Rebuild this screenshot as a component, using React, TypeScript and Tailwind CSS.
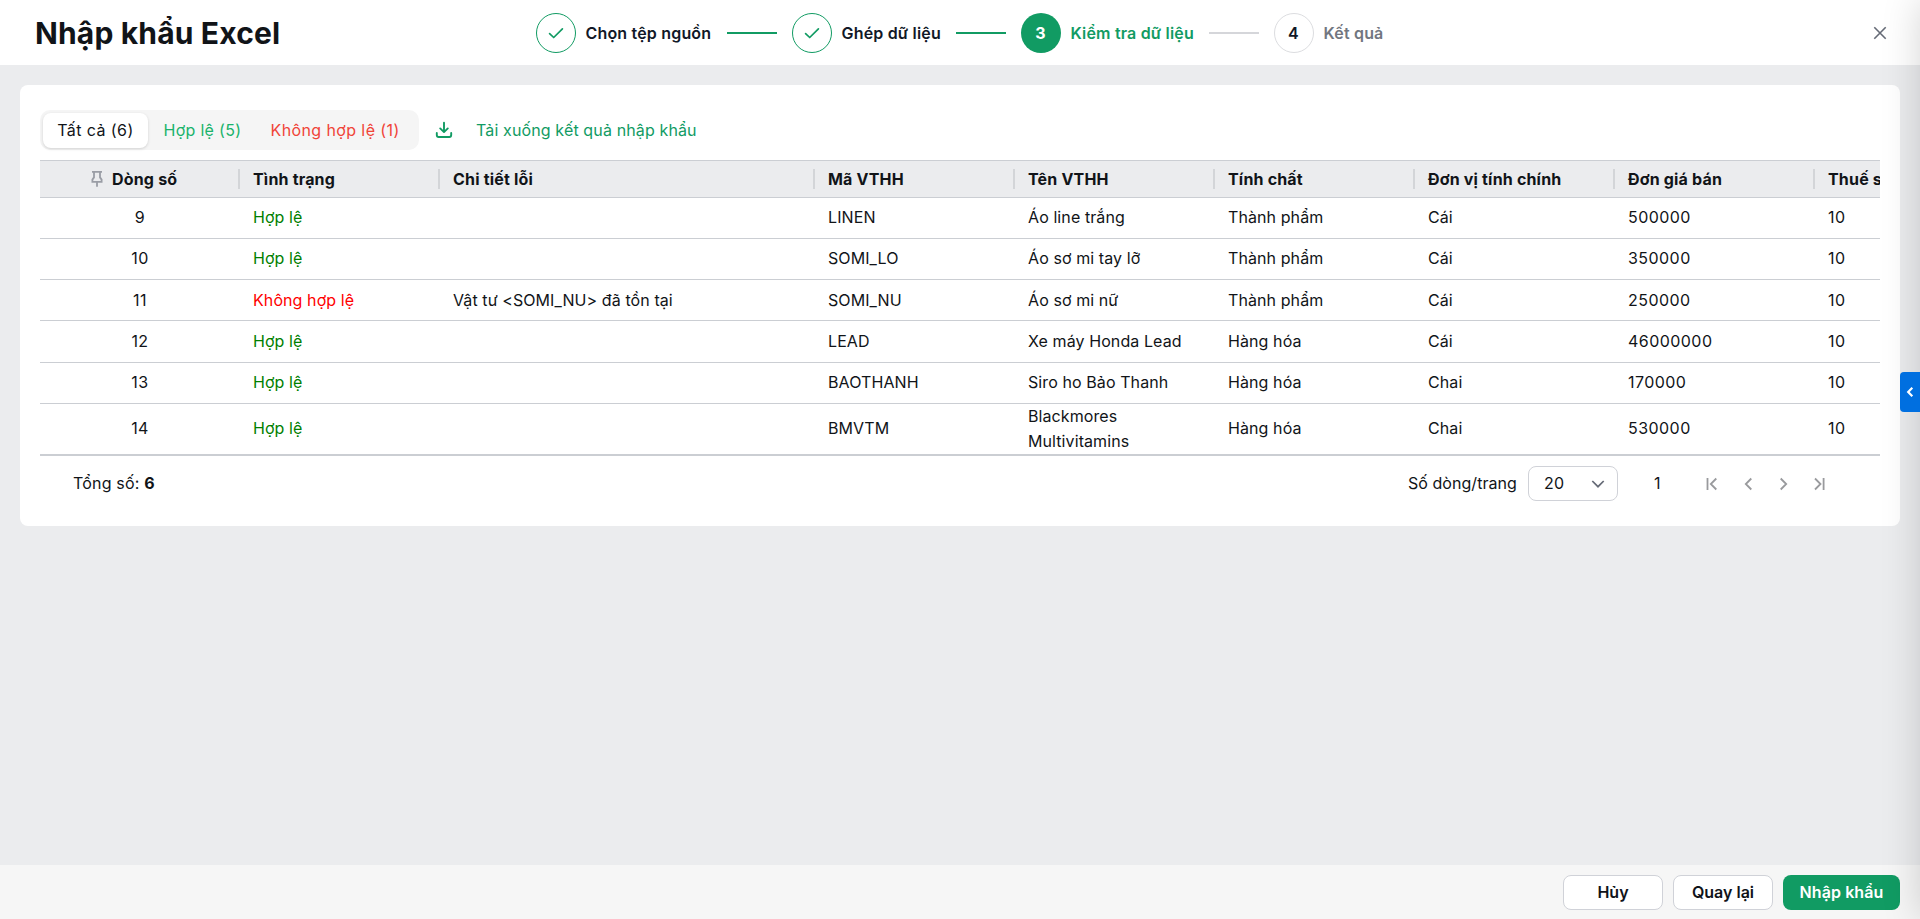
import React from "react";

type Column = { title: string; width: string; pinned?: boolean };
type Row = { line: number; ok: boolean; error: string; cells: string[]; height: string };

const columns: Column[] = [
  { title: "Dòng số", width: "w-[200px]", pinned: true },
  { title: "Tình trạng", width: "w-[200px]" },
  { title: "Chi tiết lỗi", width: "w-[375px]" },
  { title: "Mã VTHH", width: "w-[200px]" },
  { title: "Tên VTHH", width: "w-[200px]" },
  { title: "Tính chất", width: "w-[200px]" },
  { title: "Đơn vị tính chính", width: "w-[200px]" },
  { title: "Đơn giá bán", width: "w-[200px]" },
  { title: "Thuế suất", width: "w-[200px]" },
];

const single = "h-[41px] border-b pb-px";
const rows: Row[] = [
  { line: 9, ok: true, error: "", cells: ["LINEN", "Áo line trắng", "Thành phẩm", "Cái", "500000", "10"], height: single },
  { line: 10, ok: true, error: "", cells: ["SOMI_LO", "Áo sơ mi tay lỡ", "Thành phẩm", "Cái", "350000", "10"], height: single },
  { line: 11, ok: false, error: "Vật tư <SOMI_NU> đã tồn tại", cells: ["SOMI_NU", "Áo sơ mi nữ", "Thành phẩm", "Cái", "250000", "10"], height: "h-[41px] border-b pt-px" },
  { line: 12, ok: true, error: "", cells: ["LEAD", "Xe máy Honda Lead", "Hàng hóa", "Cái", "46000000", "10"], height: "h-[42px] border-b" },
  { line: 13, ok: true, error: "", cells: ["BAOTHANH", "Siro ho Bảo Thanh", "Hàng hóa", "Chai", "170000", "10"], height: single },
  { line: 14, ok: true, error: "", cells: ["BMVTM", "Blackmores Multivitamins", "Hàng hóa", "Chai", "530000", "10"], height: "h-[52px] border-b-2 [&>*:not(:nth-child(5))]:-mt-px" },
];

function CheckIcon() {
  return (
    <svg width="16" height="16" viewBox="0 0 16 16" fill="none" stroke="#119b63" strokeWidth="1.7" strokeLinecap="round" strokeLinejoin="round">
      <path d="M1.6 8.6 5.7 12.5 14.4 3.9" />
    </svg>
  );
}

function DoneStep({ label, width }: { label: string; width: string }) {
  return (
    <div className="flex items-center">
      <div className="flex size-10 items-center justify-center rounded-full border border-[#119b63]">
        <CheckIcon />
      </div>
      <span className={"ml-2.5 font-semibold whitespace-nowrap " + width}>{label}</span>
    </div>
  );
}

function PinIcon() {
  return (
    <svg width="12" height="18" viewBox="0 0 12 18" fill="none" stroke="#9a9da5" strokeWidth="1.8">
      <path d="M1 1.8h10M3 1.8v5.6L1.4 9.6v2.2h9.2V9.6L9 7.4V1.8M6 11.8v5" />
    </svg>
  );
}

function PageIcon({ d, className }: { d: string; className: string }) {
  return (
    <svg className={className} width="12" height="14" viewBox="0 0 12 14" fill="none" stroke="#999a9d" strokeWidth="1.8">
      <path d={d} />
    </svg>
  );
}

function Stepper() {
  return (
    <div className="flex items-center pl-[255px] tracking-[0.18px] text-[#111827]">
      <DoneStep label="Chọn tệp nguồn" width="w-[126px]" />
      <i className="mx-[15px] h-0.5 w-[50px] bg-[#119b63]" />
      <DoneStep label="Ghép dữ liệu" width="w-[99px]" />
      <i className="mx-[15px] h-0.5 w-[50px] bg-[#119b63]" />
      <div className="flex items-center">
        <div className="flex size-10 items-center justify-center rounded-full bg-[#119b63] font-bold text-white">3</div>
        <span className="ml-2.5 w-[123px] font-semibold whitespace-nowrap text-[#119b63]">Kiểm tra dữ liệu</span>
      </div>
      <i className="mx-[15px] h-0.5 w-[50px] bg-[#d5d6da]" />
      <div className="flex items-center">
        <div className="flex size-10 items-center justify-center rounded-full border border-[#dcdde0] font-semibold">4</div>
        <span className="ml-2.5 font-semibold text-[#717680]">Kết quả</span>
      </div>
    </div>
  );
}

function Header() {
  return (
    <header className="flex h-[65px] shrink-0 items-center bg-white pt-px pl-[35px]">
      <h1 className="w-[245.5px] text-[30px] font-bold tracking-[0.16px] whitespace-nowrap text-[#111418]">Nhập khẩu Excel</h1>
      <Stepper />
      <button className="mr-[33px] ml-auto flex size-[14px] items-center justify-center">
        <svg width="14" height="14" viewBox="0 0 14 14" stroke="#656a76" strokeWidth="1.6">
          <path d="M1.3 1.3 12.7 12.7M12.7 1.3 1.3 12.7" />
        </svg>
      </button>
    </header>
  );
}

function Toolbar() {
  return (
    <div className="flex h-10 items-center">
      <div className="flex h-10 w-[379px] items-center rounded-[10px] bg-[#f5f5f5] p-[3px] whitespace-nowrap">
        <button className="h-[35px] w-[105px] rounded-[8px] bg-white tracking-[0.42px] shadow-[0_1px_3px_rgba(0,0,0,0.15)]">Tất cả (6)</button>
        <button className="ml-[15.5px] w-[76px] text-left tracking-[0.3px] text-[#19b36b]">Hợp lệ (5)</button>
        <button className="ml-[31px] tracking-[0.4px] text-[#f04438]">Không hợp lệ (1)</button>
      </div>
      <svg className="ml-[16px]" width="18" height="18" viewBox="0 0 18 18" fill="none" stroke="#119b63" strokeWidth="1.9" strokeLinecap="round" strokeLinejoin="round">
        <path d="M9 1.8v9M5.2 7.4 9 11.1l3.8-3.7M1.8 12v2.1c0 1.2.7 1.9 1.9 1.9h10.6c1.2 0 1.9-.7 1.9-1.9V12" />
      </svg>
      <a className="ml-[23px] tracking-[0.13px] text-[#119b63]">Tải xuống kết quả nhập khẩu</a>
    </div>
  );
}

function Table() {
  return (
    <div className="mt-2.5 w-[1840px] overflow-hidden">
      <div className="flex h-[38px] w-[1975px] items-center border-y border-[#cbced3] bg-[#ebecee] font-bold tracking-[0.18px]">
        {columns.map((c) => (
          <div
            key={c.title}
            className={"flex h-5 shrink-0 items-center border-r-2 border-[#d3d5d8] whitespace-nowrap " + c.width + (c.pinned ? " pl-[51px]" : " pl-[13px]")}
          >
            {c.pinned && <span className="mr-[9px]"><PinIcon /></span>}
            {c.title}
          </div>
        ))}
      </div>
      {rows.map((r) => (
        <div key={r.line} className={"flex w-[1975px] items-center border-[#cbced3] leading-[25px] tracking-[0.09px] " + r.height}>
          <div className="w-[200px] shrink-0 text-center tracking-[0.45px]">{r.line}</div>
          <div className={"w-[200px] shrink-0 pl-[13px] " + (r.ok ? "text-[#008000]" : "text-[#ff0000]")}>{r.ok ? "Hợp lệ" : "Không hợp lệ"}</div>
          <div className="w-[375px] shrink-0 pl-[13px]">{r.error}</div>
          {r.cells.map((cell, i) => (
            <div key={i} className={"w-[200px] shrink-0 px-[13px]" + (i > 3 ? " tracking-[0.45px]" : "")}>{cell}</div>
          ))}
        </div>
      ))}
    </div>
  );
}

function Pagination() {
  return (
    <div className="mt-2.5 flex h-[35px] items-center pl-[33px]">
      <span className="pb-0.5 tracking-[0.17px]">Tổng số: <b>6</b></span>
      <span className="mr-[11px] ml-auto pb-0.5 tracking-[0.06px]">Số dòng/trang</span>
      <div className="flex h-[35px] w-[90px] items-center rounded-[8px] border border-[#d0d2d8] pl-[15px]">
        <span className="pb-0.5 tracking-[0.3px]">20</span>
        <svg className="mr-[12px] ml-auto" width="14" height="10" viewBox="0 0 14 10" fill="none" stroke="#656a76" strokeWidth="1.7">
          <path d="M1.3 2 7 7.7 12.7 2" />
        </svg>
      </div>
      <span className="ml-[36px] w-[50px] pb-0.5">1</span>
      <PageIcon className="ml-[2px]" d="M1.5 1v12M10.3 1.5 4.8 7l5.5 5.5" />
      <PageIcon className="ml-[25px]" d="M8.3 1.5 2.8 7l5.5 5.5" />
      <PageIcon className="ml-[23px]" d="M2.7 1.5 8.2 7l-5.5 5.5" />
      <PageIcon className="mr-[55px] ml-[23px]" d="M2 1.5 7.5 7 2 12.5M10.6 1v12" />
    </div>
  );
}

function Footer() {
  return (
    <footer className="flex h-[54px] shrink-0 items-center justify-end gap-2.5 bg-[#f6f6f6] pr-5 pt-px font-semibold text-[#101319]">
      <button className="h-[35px] w-[100px] rounded-[8px] border border-[#d0d2d8] bg-white pb-0.5">Hủy</button>
      <button className="h-[35px] w-[100px] rounded-[8px] border border-[#d0d2d8] bg-white pb-0.5">Quay lại</button>
      <button className="h-[35px] w-[117px] rounded-[8px] bg-[#119b63] pb-0.5 tracking-[0.1px] text-white">Nhập khẩu</button>
    </footer>
  );
}

export default function App() {
  return (
    <div className="relative flex h-[919px] w-[1920px] flex-col overflow-hidden bg-[#ebecee] font-['Inter',sans-serif] text-[16px] text-[#111418]">
      <Header />
      <main className="flex-1 p-5">
        <section className="h-[441px] rounded-[8px] bg-white px-5 pt-[25px]">
          <Toolbar />
          <Table />
          <Pagination />
        </section>
      </main>
      <Footer />
      <aside className="pointer-events-none absolute top-0 left-full h-full w-[300px] shadow-[0_0_36px_rgba(0,0,0,0.17)]" />
      <button className="absolute top-[372px] right-0 flex h-10 w-5 items-center justify-center rounded-l-[4px] bg-[#006fe0]">
        <svg width="8" height="12" viewBox="0 0 8 12" fill="none" stroke="#ffffff" strokeWidth="2.2">
          <path d="M6.3 1.8 2.2 6l4.1 4.2" />
        </svg>
      </button>
    </div>
  );
}
